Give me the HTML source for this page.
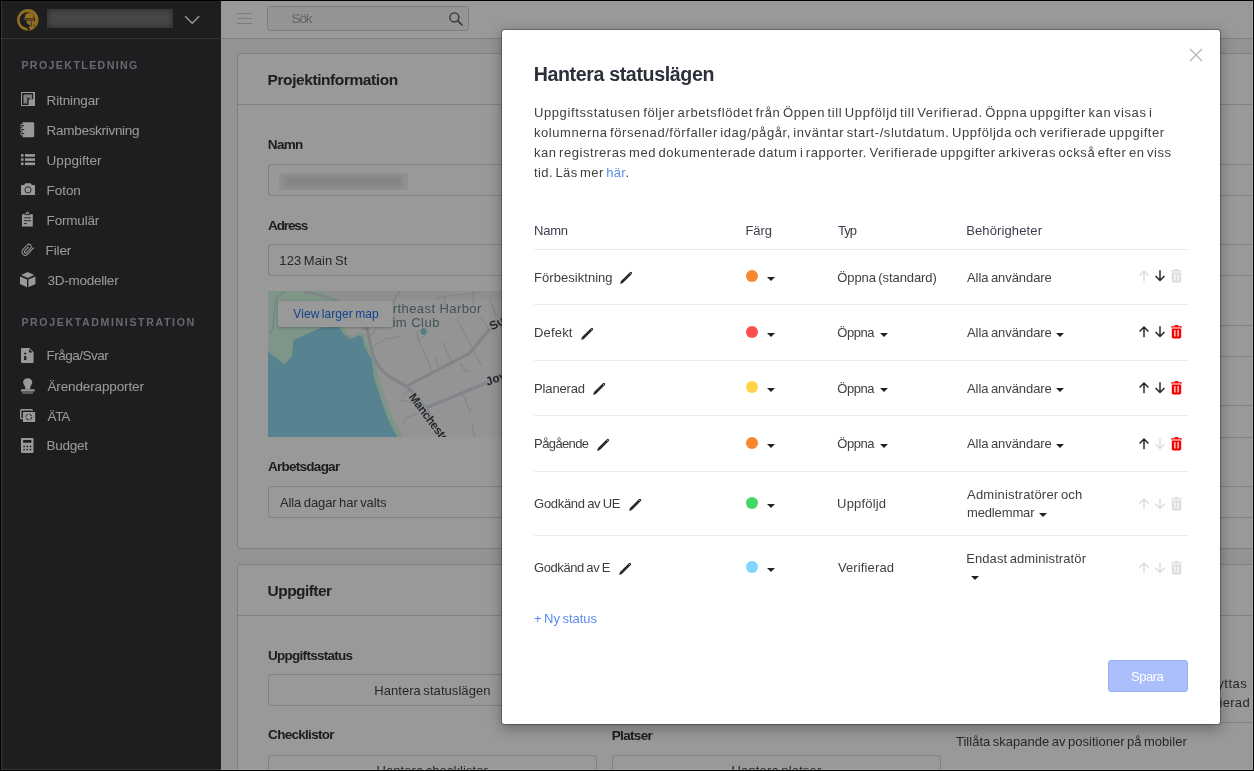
<!DOCTYPE html>
<html lang="sv">
<head>
<meta charset="utf-8">
<title>Hantera statuslägen</title>
<style>
*{box-sizing:border-box;margin:0;padding:0}
html,body{width:1254px;height:771px;overflow:hidden;background:#000}
body{position:relative;font-family:"Liberation Sans",Arial,sans-serif;font-size:13px;color:#444}
.t{position:absolute;white-space:nowrap;line-height:20px;height:20px;display:block}
.abs{position:absolute}
#app{will-change:transform;position:absolute;left:0;top:0;width:1254px;height:771px;overflow:hidden;background:#f3f5f9}
#side{position:absolute;left:0;top:0;width:221px;height:771px;background:#303236}
#side .hdr{position:absolute;left:0;top:0;width:221px;height:39px;border-bottom:1px solid #55575a}
#top{position:absolute;left:221px;top:0;width:1033px;height:39px;background:#fff;border-bottom:1px solid #d3d4d6}
.search{position:absolute;left:267px;top:6px;width:202px;height:25px;background:#f5f7fa;border:1px solid #d0d2d6;border-radius:3px}
.card{position:absolute;background:#fff;border:1px solid #d2d4d9;border-radius:3px}
.card .ch{position:absolute;left:0;top:0;right:0;height:51px;border-bottom:1px solid #d5d7da}
.inp{position:absolute;height:32px;background:#fff;border:1px solid #d3d5d8;border-radius:3px}
.hl{position:absolute;height:1px;background:#d3d5d8}
#map{position:absolute;left:268px;top:291px;width:420px;height:146px;overflow:hidden;background:#f8f7f7}
#map .vl{position:absolute;left:10px;top:10px;width:115px;height:26px;background:#fff;border-radius:2px;box-shadow:0 1px 3px rgba(0,0,0,.25)}
#backdrop{position:absolute;left:0;top:0;width:1254px;height:771px;background:rgba(0,0,0,.4)}
#modal{position:absolute;left:501px;top:29px;width:720px;height:696px;background:#fff;border:1px solid rgba(0,0,0,.28);border-radius:3.5px;box-shadow:0 4px 14px rgba(0,0,0,.3);background-clip:padding-box}
#mwrap{will-change:transform;position:absolute;left:0;top:0;width:1254px;height:771px}
.row{position:absolute;left:534px;width:654px;height:1px;background:#ececec}
.dot{position:absolute;width:12px;height:12px;border-radius:50%}
.caret{position:absolute;width:0;height:0;border-left:4px solid transparent;border-right:4px solid transparent;border-top:4px solid #222}
#spara{position:absolute;left:1108px;top:660px;width:80px;height:32px;background:#aabefc;border:1px solid #9db1f4;border-radius:3px}
a{color:#5b8def;text-decoration:none}
#frame{position:absolute;left:0;top:0;width:1254px;height:771px;border:1px solid #000;pointer-events:none}
#frame2{position:absolute;left:1px;top:1px;width:1252px;height:769px;border:1px solid rgba(255,255,255,.11);border-top:none;pointer-events:none}
svg{position:absolute;overflow:visible}
</style>
</head>
<body>
<div id="app">
  <nav id="side">
    <div class="hdr"></div>
    <svg style="left:16.8px;top:8.8px" width="21.6" height="21.6" viewBox="0 0 21.6 21.6">
<defs><linearGradient id="lg" x1="0" y1="0" x2="0.3" y2="1"><stop offset="0" stop-color="#f0b642"/><stop offset="1" stop-color="#f5b636"/></linearGradient></defs>
<circle cx="10.8" cy="10.8" r="10.75" fill="url(#lg)"/>
<circle cx="10.3" cy="11" r="7.7" fill="#303236"/>
<path d="M2.2 10.4L8.6 8.4 8 11.4Z" fill="#303236"/>
<path d="M7.7 8.9A4.5 5 0 0 1 16.7 8.9Z" fill="url(#lg)"/>
<path d="M6.6 10.6H17.2V9.6H6.6Z" fill="url(#lg)"/>
<path d="M9 11.6H17.4L18.6 17.4 15.2 20.6 11.6 20.9 12.6 17 10.6 15.4Z" fill="url(#lg)"/>
<path d="M10.6 14.2L13.4 16.6 12.2 17.6Z" fill="#303236"/>
<path d="M14.1 12.2L14.8 17.8" stroke="#303236" stroke-width="0.7"/>
<path d="M7.2 14.6L8.6 13.6 13 20.6 11.4 21.6Z" fill="#303236"/>
<path d="M16.9 15.4Q17.4 18 19.3 19.1" stroke="#303236" stroke-width="0.8" fill="none"/>
</svg>
    <div class="abs" style="left:47px;top:9px;width:126px;height:19px;background:#777;box-shadow:inset 0 0 5px 2px rgba(60,60,60,.55)"></div>
    <svg style="left:184px;top:15px" width="16" height="10" viewBox="0 0 16 10"><path d="M1.2 1.3 L8.2 8.3 L15.2 1.3" fill="none" stroke="#fff" stroke-width="1.4"/></svg>
    <svg style="left:20.6px;top:92.4px" width="14" height="14" viewBox="0 0 14 14"><rect x="0" y="0" width="14" height="14" fill="#ffffff"/><rect x="1" y="1" width="12" height="12" fill="#303236"/><rect x="2.5" y="2.5" width="8.4" height="3.3" fill="#ffffff" opacity=".8"/><rect x="2.5" y="5.8" width="3.7" height="5.7" fill="#ffffff" opacity=".8"/><rect x="2.5" y="5.6" width="2.6" height="1" fill="#ffffff" opacity=".7"/><rect x="8.6" y="5.8" width="2.3" height="1.6" fill="#ffffff" opacity=".8"/><rect x="7.6" y="7.4" width="5.4" height="5.6" fill="#ffffff"/><rect x="12.2" y="1" width="0.8" height="7" fill="#ffffff"/></svg>
<svg style="left:20.4px;top:121.8px" width="15" height="16" viewBox="0 0 15 16"><path d="M2.6 0.2H12.9Q14.2 0.2 14.2 1.5V14Q14.2 15.2 12.9 15.2H2.6Z" fill="#ffffff"/><g fill="none" stroke="#ffffff" stroke-width="1"><circle cx="2.2" cy="3.7" r="1.5"/><circle cx="2.2" cy="7.7" r="1.5"/><circle cx="2.2" cy="11.6" r="1.5"/></g><path d="M2.2 3.7H4.2M2.2 7.7H4.2M2.2 11.6H4.2" stroke="#303236" stroke-width="1"/></svg>
<svg style="left:20.6px;top:153.9px" width="14" height="12" viewBox="0 0 14 12"><g fill="#ffffff"><rect x="0" y="0.1" width="2.5" height="2.6"/><rect x="4" y="0.1" width="10" height="2.6"/><rect x="0" y="4.3" width="2.5" height="2.6"/><rect x="4" y="4.3" width="10" height="2.6"/><rect x="0" y="8.5" width="2.5" height="2.6"/><rect x="4" y="8.5" width="10" height="2.6"/></g></svg>
<svg style="left:20.6px;top:183.4px" width="14" height="12" viewBox="0 0 14 12"><path d="M0.6 2H3L4.4 0.2H9.6L11 2H13.4Q14 2 14 2.6V11.4Q14 12 13.4 12H0.6Q0 12 0 11.4V2.6Q0 2 0.6 2Z" fill="#ffffff"/><circle cx="7" cy="6.9" r="3.1" fill="none" stroke="#303236" stroke-width="0.9"/></svg>
<svg style="left:21.6px;top:210.8px" width="11" height="16" viewBox="0 0 11 16"><path d="M0 3.3H2.8L5.4 0.2L8 3.3H10.8V15.4H0Z" fill="#ffffff"/><path d="M2.8 3.6H8" stroke="#303236" stroke-width="1"/><circle cx="5.4" cy="2" r="0.7" fill="#8c8c8c"/><path d="M1.8 6.8H9M1.8 9.7H9M1.8 12.6H5" stroke="#303236" stroke-width="0.9"/></svg>
<svg style="left:20px;top:242px" width="15" height="16" viewBox="0 0 15 16"><g transform="translate(7.2,7.9) rotate(-47)"><path d="M5.8 3.3H-2.8A3.3 3.3 0 0 1 -2.8 -3.3H3.6A2.35 2.35 0 0 1 3.6 1.4H-2.4A1.25 1.25 0 0 1 -2.4 -1.1H3" fill="none" stroke="#ffffff" stroke-width="1.05" stroke-linecap="round"/></g></svg>
<svg style="left:19.9px;top:271.8px" width="15.4" height="15.4" viewBox="0 0 15.4 15.4"><g fill="#ffffff"><path d="M7.7 0.1L14.3 2.9 7.7 5.9 1.1 2.9Z"/><path d="M0 4.5L7 7.4V15.3L0 12.1Z"/><path d="M15.4 4.5L8.4 7.4V15.3L15.4 12.1Z"/></g></svg>
<svg style="left:21.2px;top:348px" width="12.6" height="15" viewBox="0 0 12.6 15"><path d="M1 0H8.4L12.6 4.2V14Q12.6 15 11.6 15H1Q0 15 0 14V1Q0 0 1 0Z" fill="#ffffff"/><path d="M8 0.9V4.6H11.7Z" fill="#303236"/><circle cx="4.2" cy="5.5" r="1.05" fill="#303236"/><rect x="3.1" y="8.1" width="2.3" height="4" fill="#303236"/></svg>
<svg style="left:20.8px;top:377.6px" width="13.6" height="16" viewBox="0 0 13.6 16"><path d="M6.7 0.2C9.5 0.2 11.3 2 11.3 4.2C11.3 6 9.6 7.4 9.2 9.5V11.3H4.2V9.5C3.8 7.4 2.1 6 2.1 4.2C2.1 2 3.9 0.2 6.7 0.2Z" fill="#ffffff"/><rect x="0" y="11.3" width="13.6" height="2.2" fill="#ffffff"/><rect x="1.3" y="14.5" width="10.8" height="1" fill="#ffffff"/></svg>
<svg style="left:20px;top:409px" width="15.2" height="13.2" viewBox="0 0 15.2 13.2"><path d="M2.9 9.6H1.6Q0.7 9.6 0.7 8.7V1.6Q0.7 0.7 1.6 0.7H11.4Q12.3 0.7 12.5 1.9" fill="none" stroke="#ffffff" stroke-width="1.4"/><rect x="2.9" y="2.9" width="12.3" height="10.2" rx="0.9" fill="#ffffff"/><circle cx="8.9" cy="8" r="2.9" fill="none" stroke="#303236" stroke-width="1" stroke-dasharray="3.2 1.35"/></svg>
<svg style="left:21.3px;top:438px" width="12.5" height="15" viewBox="0 0 12.5 15"><rect x="0" y="0" width="12.5" height="15" rx="1.1" fill="#ffffff"/><rect x="2" y="2" width="8.5" height="2.8" rx="0.7" fill="#303236"/><g fill="#303236"><circle cx="3.1" cy="8.4" r="0.85"/><circle cx="6.3" cy="8.4" r="0.85"/><circle cx="9.5" cy="8.4" r="0.85"/><circle cx="3.1" cy="11.6" r="0.85"/><circle cx="6.3" cy="11.6" r="0.85"/><circle cx="9.5" cy="11.6" r="0.85"/></g></svg>
<span class="t" id="sh1" style="left:21.40px;top:55.43px;font-size:10.6px;font-weight:700;color:#aeb0b4;letter-spacing:1.405px;">PROJEKTLEDNING</span>
<span class="t" id="s1" style="left:46.60px;top:90.72px;font-size:13.5px;font-weight:400;color:#ffffff;letter-spacing:-0.136px;">Ritningar</span>
<span class="t" id="s2" style="left:46.60px;top:120.62px;font-size:13.5px;font-weight:400;color:#ffffff;letter-spacing:-0.296px;">Rambeskrivning</span>
<span class="t" id="s3" style="left:46.60px;top:150.52px;font-size:13.5px;font-weight:400;color:#ffffff;letter-spacing:0.022px;">Uppgifter</span>
<span class="t" id="s4" style="left:46.60px;top:180.72px;font-size:13.5px;font-weight:400;color:#ffffff;letter-spacing:-0.066px;">Foton</span>
<span class="t" id="s5" style="left:46.60px;top:210.62px;font-size:13.5px;font-weight:400;color:#ffffff;letter-spacing:-0.180px;">Formulär</span>
<span class="t" id="s6" style="left:45.60px;top:240.62px;font-size:13.5px;font-weight:400;color:#ffffff;letter-spacing:-0.126px;">Filer</span>
<span class="t" id="s7" style="left:47.40px;top:270.82px;font-size:13.5px;font-weight:400;color:#ffffff;letter-spacing:-0.227px;">3D-modeller</span>
<span class="t" id="sh2" style="left:21.40px;top:311.73px;font-size:10.6px;font-weight:700;color:#aeb0b4;letter-spacing:1.625px;">PROJEKTADMINISTRATION</span>
<span class="t" id="s8" style="left:46.60px;top:346.42px;font-size:13.5px;font-weight:400;color:#ffffff;letter-spacing:-0.513px;">Fråga/Svar</span>
<span class="t" id="s9" style="left:47.40px;top:376.52px;font-size:13.5px;font-weight:400;color:#ffffff;letter-spacing:-0.126px;">Ärenderapporter</span>
<span class="t" id="s10" style="left:47.40px;top:406.62px;font-size:13.5px;font-weight:400;color:#ffffff;letter-spacing:-1.152px;">ÄTA</span>
<span class="t" id="s11" style="left:46.60px;top:436.22px;font-size:13.5px;font-weight:400;color:#ffffff;letter-spacing:-0.289px;">Budget</span>
  </nav>
  <header id="top"></header>
  <svg style="left:237px;top:12px" width="16" height="13" viewBox="0 0 16 13"><path d="M0 1.5H15M0 6.5H15M0 11.5H15" stroke="#cfcfcf" stroke-width="1" fill="none"/></svg>
  <div class="search"></div>
  <svg style="left:448px;top:11px" width="16" height="16" viewBox="0 0 16 16"><circle cx="6.4" cy="6.4" r="4.5" fill="none" stroke="#555" stroke-width="1.35"/><path d="M9.7 9.7L14 14" stroke="#555" stroke-width="1.6" stroke-linecap="round"/></svg>

  <section class="card" style="left:237px;top:53px;width:1060px;height:496px"><div class="ch"></div></section>
  <div class="inp" style="left:268px;top:164px;width:672px"></div>
  <div class="abs" style="left:279px;top:173px;width:129px;height:17px;background:#f1f1f1"></div><div class="abs" style="left:285px;top:177px;width:117px;height:9px;background:#d9d9d9;filter:blur(2.5px)"></div>
  <div class="inp" style="left:268px;top:244px;width:672px"></div>
  <div class="inp" style="left:268px;top:486px;width:672px"></div>
  <!-- right column inputs (partly visible) -->
  <div class="inp" style="left:956px;top:164px;width:330px"></div>
  <div class="inp" style="left:956px;top:244px;width:330px"></div>
  <div class="inp" style="left:956px;top:325px;width:330px"></div>
  <div class="inp" style="left:956px;top:405px;width:330px;height:33px"></div>
  <div class="inp" style="left:956px;top:486px;width:330px"></div>
  <div id="map">
    <svg style="left:0;top:0" width="420" height="146" viewBox="0 0 420 146" font-family="Liberation Sans, Arial, sans-serif">
<polygon points="57.0,0.0 252.0,0.0 252.0,9.0 70.0,9.0" fill="#f1efef"/>
<polygon points="0.0,0.0 57.0,0.0 70.0,9.0 78.0,21.0 74.0,33.0 78.0,40.0 84.0,45.0 91.0,40.5 97.0,43.0 100.5,56.0 108.0,68.0 110.0,84.0 113.0,93.0 119.5,112.0 126.0,129.5 135.5,146.0 0.0,146.0" fill="#d3f8e2"/>
<polygon points="0.0,60.6 16.2,73.4 23.8,65.2 25.5,48.9 54.7,36.3 71.0,36.3 75.7,43.0 82.2,48.3 90.9,44.2 94.4,46.0 96.8,55.9 103.8,68.7 105.5,84.0 108.0,93.0 114.3,112.5 120.9,130.1 129.3,146.0 0.0,146.0" fill="#90daee"/>
<polyline points="34.9,0.0 54.0,5.0 70.2,10.0 88.0,18.0 96.0,27.0 98.9,36.4" fill="none" stroke="#d7dee7" stroke-width="2.8" stroke-linecap="round" stroke-linejoin="round"/>
<polyline points="98.9,36.4 102.2,53.0 106.0,67.0 112.0,76.9 119.8,84.6 138.3,95.3 145.2,101.5 158.4,118.0 174.3,146.5" fill="none" stroke="#d7dee7" stroke-width="3.2" stroke-linecap="round" stroke-linejoin="round"/>
<polyline points="138.3,95.3 201.5,62.3 221.0,38.9 235.0,30.5" fill="none" stroke="#d7dee7" stroke-width="3.2" stroke-linecap="round" stroke-linejoin="round"/>
<polyline points="160.7,115.8 217.1,92.4 235.0,85.5" fill="none" stroke="#d7dee7" stroke-width="3.2" stroke-linecap="round" stroke-linejoin="round"/>
<polyline points="131.5,0.0 125.6,10.7 116.0,19.0 98.9,36.4" fill="none" stroke="#d7dee7" stroke-width="2.2" stroke-linecap="round" stroke-linejoin="round"/>
<polyline points="17.0,0.0 9.0,6.0 6.0,21.0 5.0,37.0 2.0,43.0" fill="none" stroke="#c3d3da" stroke-width="1" stroke-linecap="round" stroke-linejoin="round"/>
<polyline points="149.0,45.7 164.5,80.7" fill="none" stroke="#cfd7e0" stroke-width="0.9" stroke-linecap="round" stroke-linejoin="round"/>
<polyline points="174.3,50.6 184.0,72.0" fill="none" stroke="#cfd7e0" stroke-width="0.9" stroke-linecap="round" stroke-linejoin="round"/>
<polyline points="168.4,67.1 170.4,76.9" fill="none" stroke="#cfd7e0" stroke-width="0.9" stroke-linecap="round" stroke-linejoin="round"/>
<polyline points="188.9,28.2 213.2,73.9" fill="none" stroke="#cfd7e0" stroke-width="0.9" stroke-linecap="round" stroke-linejoin="round"/>
<polyline points="213.2,26.2 221.0,39.0" fill="none" stroke="#cfd7e0" stroke-width="0.9" stroke-linecap="round" stroke-linejoin="round"/>
<polyline points="191.8,72.0 195.7,78.8 201.5,80.7" fill="none" stroke="#cfd7e0" stroke-width="0.9" stroke-linecap="round" stroke-linejoin="round"/>
<polyline points="194.7,103.1 202.5,120.6" fill="none" stroke="#cfd7e0" stroke-width="0.9" stroke-linecap="round" stroke-linejoin="round"/>
<polyline points="204.4,133.3 206.4,146.0" fill="none" stroke="#cfd7e0" stroke-width="0.9" stroke-linecap="round" stroke-linejoin="round"/>
<polyline points="130.5,110.9 135.4,109.0 147.0,113.8" fill="none" stroke="#cfd7e0" stroke-width="0.9" stroke-linecap="round" stroke-linejoin="round"/>
<polyline points="134.4,134.3 137.3,127.5 150.9,121.6" fill="none" stroke="#cfd7e0" stroke-width="0.9" stroke-linecap="round" stroke-linejoin="round"/>
<polyline points="104.0,56.0 117.0,48.0 131.5,45.7" fill="none" stroke="#cfd7e0" stroke-width="0.9" stroke-linecap="round" stroke-linejoin="round"/>
<polyline points="167.5,6.8 213.2,1.0" fill="none" stroke="#cfd7e0" stroke-width="0.9" stroke-linecap="round" stroke-linejoin="round"/>
<polyline points="176.0,6.0 177.5,17.0" fill="none" stroke="#cfd7e0" stroke-width="0.9" stroke-linecap="round" stroke-linejoin="round"/>
<polyline points="204.4,2.0 205.5,14.0" fill="none" stroke="#cfd7e0" stroke-width="0.9" stroke-linecap="round" stroke-linejoin="round"/>
<polyline points="150.0,48.6 149.0,40.8 156.8,37.0 160.0,40.0 157.0,45.0 150.0,48.6" fill="none" stroke="#cfd7e0" stroke-width="0.9" stroke-linecap="round" stroke-linejoin="round"/>
<polyline points="102.0,45.0 110.0,36.0 116.0,33.0" fill="none" stroke="#cfd7e0" stroke-width="0.9" stroke-linecap="round" stroke-linejoin="round"/>
<polyline points="222.0,9.0 228.0,25.0" fill="none" stroke="#cfd7e0" stroke-width="0.9" stroke-linecap="round" stroke-linejoin="round"/>
<polyline points="136.0,103.0 142.0,99.0" fill="none" stroke="#cfd7e0" stroke-width="0.9" stroke-linecap="round" stroke-linejoin="round"/>
<path d="M152.4 40l3-3.4 3 3.4-1.1 3.6h-3.8z" fill="#7fd0dc"/>
<circle cx="97.5" cy="36" r="2.6" fill="none" stroke="#c4c9cf" stroke-width="1"/>
<text x="213.3" y="21.5" text-anchor="end" font-size="13" fill="#6f8793" textLength="106" lengthAdjust="spacing">Northeast Harbor</text>
<text x="171.4" y="35.7" text-anchor="end" font-size="13" fill="#6f8793" textLength="66" lengthAdjust="spacing">Swim Club</text>
<text transform="translate(143.6,103.5) rotate(53)" x="0" y="4.2" font-size="12" font-weight="700" fill="#3c4450" stroke="#f8f7f7" stroke-width="2" paint-order="stroke" textLength="80" lengthAdjust="spacing">Manchester Rd</text>
<text transform="translate(219.5,95) rotate(-21)" x="0" y="0" font-size="12" font-weight="700" fill="#3c4450" stroke="#f8f7f7" stroke-width="2" paint-order="stroke">Joy Rd</text>
<text transform="translate(224,39.5) rotate(-28)" x="0" y="0" font-size="12" font-weight="700" fill="#3c4450" stroke="#f8f7f7" stroke-width="2" paint-order="stroke">Summit Rd</text>
</svg>
    <div class="vl"></div>
  </div>
  <section class="card" style="left:237px;top:564px;width:1060px;height:400px"><div class="ch"></div></section>
  <div class="inp" style="left:268px;top:674px;width:329px"></div>
  <div class="inp" style="left:268px;top:755px;width:329px"></div>
  <div class="inp" style="left:612px;top:755px;width:329px"></div>
  <div class="hl" style="left:956px;top:722px;width:330px"></div>
<span class="t" id="sok" style="left:291.60px;top:8.62px;font-size:13.5px;font-weight:400;color:#a6a6a6;letter-spacing:-1.157px;">Sök</span>
<span class="t" id="c1" style="left:267.60px;top:70.13px;font-size:15.5px;font-weight:700;color:#333;letter-spacing:-0.422px;">Projektinformation</span>
<span class="t" id="l1" style="left:267.80px;top:134.82px;font-size:13.5px;font-weight:700;color:#333;letter-spacing:-0.655px;">Namn</span>
<span class="t" id="l2" style="left:268.10px;top:215.82px;font-size:13.5px;font-weight:700;color:#333;letter-spacing:-1.143px;">Adress</span>
<span class="t" id="i2" style="left:279.30px;top:250.80px;font-size:13px;font-weight:400;color:#444;letter-spacing:0.103px;word-spacing:-1.208px;">123 Main St</span>
<span class="t" id="vlm" style="left:293.30px;top:304.04px;font-size:12px;font-weight:400;color:#1a73e8;letter-spacing:0.084px;word-spacing:-1.104px;">View larger map</span>
<span class="t" id="l3" style="left:268.10px;top:456.82px;font-size:13.5px;font-weight:700;color:#333;letter-spacing:-0.748px;">Arbetsdagar</span>
<span class="t" id="i3" style="left:279.90px;top:492.70px;font-size:13px;font-weight:400;color:#444;letter-spacing:-0.080px;word-spacing:-1.025px;">Alla dagar har valts</span>
<span class="t" id="c2" style="left:267.60px;top:580.83px;font-size:15.5px;font-weight:700;color:#333;letter-spacing:-0.558px;">Uppgifter</span>
<span class="t" id="l4" style="left:268.10px;top:645.82px;font-size:13.5px;font-weight:700;color:#333;letter-spacing:-0.742px;">Uppgiftsstatus</span>
<span class="t" id="b1" style="left:374.20px;top:680.60px;font-size:13px;font-weight:400;color:#444;letter-spacing:0.061px;word-spacing:-1.166px;">Hantera statuslägen</span>
<span class="t" id="l5" style="left:268.10px;top:725.42px;font-size:13.5px;font-weight:700;color:#333;letter-spacing:-0.707px;">Checklistor</span>
<span class="t" id="l6" style="left:611.80px;top:725.52px;font-size:13.5px;font-weight:700;color:#333;letter-spacing:-0.681px;">Platser</span>
<span class="t" id="b2" style="left:376.50px;top:761.30px;font-size:13px;font-weight:400;color:#444;letter-spacing:0.064px;word-spacing:-1.169px;">Hantera checklistor</span>
<span class="t" id="b3" style="left:731.50px;top:761.30px;font-size:13px;font-weight:400;color:#444;letter-spacing:0.155px;word-spacing:-1.260px;">Hantera platser</span>
<span class="t" id="r1" style="left:1124.50px;top:673.60px;font-size:13px;font-weight:400;color:#444;letter-spacing:0.536px;word-spacing:-1.641px;">Uppgifter kan flyttas</span>
<span class="t" id="r2" style="left:1139.20px;top:692.60px;font-size:13px;font-weight:400;color:#444;letter-spacing:0.289px;word-spacing:-1.394px;">när de är verifierad</span>
<span class="t" id="r3" style="left:956.00px;top:732.40px;font-size:13px;font-weight:400;color:#444;letter-spacing:0.012px;word-spacing:-1.117px;">Tillåta skapande av positioner på mobiler</span>
</div>
<div id="backdrop"></div>
<div id="mwrap">
  <div id="modal"></div>
  <svg style="left:1189px;top:48px" width="14" height="14" viewBox="0 0 14 14"><path d="M1 1L13 13M13 1L1 13" stroke="#b4b4b4" stroke-width="1.1" fill="none"/></svg>
  <div class="row" style="top:249px"></div>
<div class="row" style="top:304px"></div>
<div class="row" style="top:360px"></div>
<div class="row" style="top:415px"></div>
<div class="row" style="top:471px"></div>
<div class="row" style="top:535px"></div>
<div class="dot" style="left:746px;top:270.1px;background:#f88830"></div>
<div class="caret" style="left:767px;top:276.9px"></div>
<svg style="left:620.4px;top:271.7px" width="12" height="12" viewBox="0 0 12 12"><g transform="translate(0.1,11.9) rotate(-45)"><path d="M0 0L2.6 -1.35H15.2A1.35 1.35 0 0 1 15.2 1.35H2.6Z" fill="#2a2a2a"/><circle cx="14.9" cy="0" r="0.45" fill="#fff"/></g></svg>
<div class="dot" style="left:746px;top:326.1px;background:#fc5050"></div>
<div class="caret" style="left:767px;top:332.9px"></div>
<svg style="left:581.0px;top:327.7px" width="12" height="12" viewBox="0 0 12 12"><g transform="translate(0.1,11.9) rotate(-45)"><path d="M0 0L2.6 -1.35H15.2A1.35 1.35 0 0 1 15.2 1.35H2.6Z" fill="#2a2a2a"/><circle cx="14.9" cy="0" r="0.45" fill="#fff"/></g></svg>
<div class="dot" style="left:746px;top:381.4px;background:#ffd448"></div>
<div class="caret" style="left:767px;top:388.2px"></div>
<svg style="left:592.8px;top:383.0px" width="12" height="12" viewBox="0 0 12 12"><g transform="translate(0.1,11.9) rotate(-45)"><path d="M0 0L2.6 -1.35H15.2A1.35 1.35 0 0 1 15.2 1.35H2.6Z" fill="#2a2a2a"/><circle cx="14.9" cy="0" r="0.45" fill="#fff"/></g></svg>
<div class="dot" style="left:746px;top:437.3px;background:#f88830"></div>
<div class="caret" style="left:767px;top:444.1px"></div>
<svg style="left:597.3px;top:438.9px" width="12" height="12" viewBox="0 0 12 12"><g transform="translate(0.1,11.9) rotate(-45)"><path d="M0 0L2.6 -1.35H15.2A1.35 1.35 0 0 1 15.2 1.35H2.6Z" fill="#2a2a2a"/><circle cx="14.9" cy="0" r="0.45" fill="#fff"/></g></svg>
<div class="dot" style="left:746px;top:497.3px;background:#40da66"></div>
<div class="caret" style="left:767px;top:504.1px"></div>
<svg style="left:628.7px;top:498.9px" width="12" height="12" viewBox="0 0 12 12"><g transform="translate(0.1,11.9) rotate(-45)"><path d="M0 0L2.6 -1.35H15.2A1.35 1.35 0 0 1 15.2 1.35H2.6Z" fill="#2a2a2a"/><circle cx="14.9" cy="0" r="0.45" fill="#fff"/></g></svg>
<div class="dot" style="left:746px;top:561.4px;background:#80d6ff"></div>
<div class="caret" style="left:767px;top:568.2px"></div>
<svg style="left:619.0px;top:563.0px" width="12" height="12" viewBox="0 0 12 12"><g transform="translate(0.1,11.9) rotate(-45)"><path d="M0 0L2.6 -1.35H15.2A1.35 1.35 0 0 1 15.2 1.35H2.6Z" fill="#2a2a2a"/><circle cx="14.9" cy="0" r="0.45" fill="#fff"/></g></svg>
<div class="caret" style="left:880px;top:332.5px"></div>
<div class="caret" style="left:1056px;top:332.5px"></div>
<div class="caret" style="left:880px;top:387.8px"></div>
<div class="caret" style="left:1056px;top:387.8px"></div>
<div class="caret" style="left:880px;top:443.7px"></div>
<div class="caret" style="left:1056px;top:443.7px"></div>
<div class="caret" style="left:1039px;top:513.3px"></div>
<div class="caret" style="left:971px;top:575.6px"></div>
<svg style="left:1139px;top:270.4px" width="10" height="11.4" viewBox="0 0 10 11.4"><path d="M5 11.2V1.2M0.6 5.4L5 1L9.4 5.4" fill="none" stroke="#dcdcdc" stroke-width="1.45"/></svg>
<svg style="left:1155px;top:270.4px" width="10" height="11.4" viewBox="0 0 10 11.4"><path d="M5 0.2V10.2M0.6 6L5 10.4L9.4 6" fill="none" stroke="#222" stroke-width="1.45"/></svg>
<svg style="left:1171px;top:269.3px" width="11" height="13.4" viewBox="0 0 11 13.4"><path d="M3.6 0.9Q3.6 0 4.5 0H6.5Q7.4 0 7.4 0.9V1.2H10.4Q11 1.2 11 1.8V2.6H0V1.8Q0 1.2 0.6 1.2H3.6Z M0.8 3.5H10.2V12Q10.2 13.4 8.8 13.4H2.2Q0.8 13.4 0.8 12Z M3.3 5V11.6H4.5V5Z M6.5 5V11.6H7.7V5Z" fill="#dcdcdc" fill-rule="evenodd"/></svg>
<svg style="left:1139px;top:326.4px" width="10" height="11.4" viewBox="0 0 10 11.4"><path d="M5 11.2V1.2M0.6 5.4L5 1L9.4 5.4" fill="none" stroke="#222" stroke-width="1.45"/></svg>
<svg style="left:1155px;top:326.4px" width="10" height="11.4" viewBox="0 0 10 11.4"><path d="M5 0.2V10.2M0.6 6L5 10.4L9.4 6" fill="none" stroke="#222" stroke-width="1.45"/></svg>
<svg style="left:1171px;top:325.3px" width="11" height="13.4" viewBox="0 0 11 13.4"><path d="M3.6 0.9Q3.6 0 4.5 0H6.5Q7.4 0 7.4 0.9V1.2H10.4Q11 1.2 11 1.8V2.6H0V1.8Q0 1.2 0.6 1.2H3.6Z M0.8 3.5H10.2V12Q10.2 13.4 8.8 13.4H2.2Q0.8 13.4 0.8 12Z M3.3 5V11.6H4.5V5Z M6.5 5V11.6H7.7V5Z" fill="#f00" fill-rule="evenodd"/></svg>
<svg style="left:1139px;top:381.7px" width="10" height="11.4" viewBox="0 0 10 11.4"><path d="M5 11.2V1.2M0.6 5.4L5 1L9.4 5.4" fill="none" stroke="#222" stroke-width="1.45"/></svg>
<svg style="left:1155px;top:381.7px" width="10" height="11.4" viewBox="0 0 10 11.4"><path d="M5 0.2V10.2M0.6 6L5 10.4L9.4 6" fill="none" stroke="#222" stroke-width="1.45"/></svg>
<svg style="left:1171px;top:380.6px" width="11" height="13.4" viewBox="0 0 11 13.4"><path d="M3.6 0.9Q3.6 0 4.5 0H6.5Q7.4 0 7.4 0.9V1.2H10.4Q11 1.2 11 1.8V2.6H0V1.8Q0 1.2 0.6 1.2H3.6Z M0.8 3.5H10.2V12Q10.2 13.4 8.8 13.4H2.2Q0.8 13.4 0.8 12Z M3.3 5V11.6H4.5V5Z M6.5 5V11.6H7.7V5Z" fill="#f00" fill-rule="evenodd"/></svg>
<svg style="left:1139px;top:437.6px" width="10" height="11.4" viewBox="0 0 10 11.4"><path d="M5 11.2V1.2M0.6 5.4L5 1L9.4 5.4" fill="none" stroke="#222" stroke-width="1.45"/></svg>
<svg style="left:1155px;top:437.6px" width="10" height="11.4" viewBox="0 0 10 11.4"><path d="M5 0.2V10.2M0.6 6L5 10.4L9.4 6" fill="none" stroke="#dcdcdc" stroke-width="1.45"/></svg>
<svg style="left:1171px;top:436.5px" width="11" height="13.4" viewBox="0 0 11 13.4"><path d="M3.6 0.9Q3.6 0 4.5 0H6.5Q7.4 0 7.4 0.9V1.2H10.4Q11 1.2 11 1.8V2.6H0V1.8Q0 1.2 0.6 1.2H3.6Z M0.8 3.5H10.2V12Q10.2 13.4 8.8 13.4H2.2Q0.8 13.4 0.8 12Z M3.3 5V11.6H4.5V5Z M6.5 5V11.6H7.7V5Z" fill="#f00" fill-rule="evenodd"/></svg>
<svg style="left:1139px;top:497.6px" width="10" height="11.4" viewBox="0 0 10 11.4"><path d="M5 11.2V1.2M0.6 5.4L5 1L9.4 5.4" fill="none" stroke="#dcdcdc" stroke-width="1.45"/></svg>
<svg style="left:1155px;top:497.6px" width="10" height="11.4" viewBox="0 0 10 11.4"><path d="M5 0.2V10.2M0.6 6L5 10.4L9.4 6" fill="none" stroke="#dcdcdc" stroke-width="1.45"/></svg>
<svg style="left:1171px;top:496.5px" width="11" height="13.4" viewBox="0 0 11 13.4"><path d="M3.6 0.9Q3.6 0 4.5 0H6.5Q7.4 0 7.4 0.9V1.2H10.4Q11 1.2 11 1.8V2.6H0V1.8Q0 1.2 0.6 1.2H3.6Z M0.8 3.5H10.2V12Q10.2 13.4 8.8 13.4H2.2Q0.8 13.4 0.8 12Z M3.3 5V11.6H4.5V5Z M6.5 5V11.6H7.7V5Z" fill="#dcdcdc" fill-rule="evenodd"/></svg>
<svg style="left:1139px;top:561.7px" width="10" height="11.4" viewBox="0 0 10 11.4"><path d="M5 11.2V1.2M0.6 5.4L5 1L9.4 5.4" fill="none" stroke="#dcdcdc" stroke-width="1.45"/></svg>
<svg style="left:1155px;top:561.7px" width="10" height="11.4" viewBox="0 0 10 11.4"><path d="M5 0.2V10.2M0.6 6L5 10.4L9.4 6" fill="none" stroke="#dcdcdc" stroke-width="1.45"/></svg>
<svg style="left:1171px;top:560.6px" width="11" height="13.4" viewBox="0 0 11 13.4"><path d="M3.6 0.9Q3.6 0 4.5 0H6.5Q7.4 0 7.4 0.9V1.2H10.4Q11 1.2 11 1.8V2.6H0V1.8Q0 1.2 0.6 1.2H3.6Z M0.8 3.5H10.2V12Q10.2 13.4 8.8 13.4H2.2Q0.8 13.4 0.8 12Z M3.3 5V11.6H4.5V5Z M6.5 5V11.6H7.7V5Z" fill="#dcdcdc" fill-rule="evenodd"/></svg>
  <div id="spara"></div>
<span class="t" id="mt" style="left:533.70px;top:64.21px;font-size:19.6px;font-weight:700;color:#2b303b;letter-spacing:-0.364px;">Hantera statuslägen</span>
<span class="t" id="p1" style="left:533.90px;top:102.80px;font-size:13px;font-weight:400;color:#3f3f3f;letter-spacing:0.622px;word-spacing:-1.727px;">Uppgiftsstatusen följer arbetsflödet från Öppen till Uppföljd till Verifierad. Öppna uppgifter kan visas i</span>
<span class="t" id="p2" style="left:534.00px;top:122.90px;font-size:13px;font-weight:400;color:#3f3f3f;letter-spacing:0.565px;word-spacing:-1.670px;">kolumnerna försenad/förfaller idag/pågår, inväntar start-/slutdatum. Uppföljda och verifierade uppgifter</span>
<span class="t" id="p3" style="left:534.00px;top:142.90px;font-size:13px;font-weight:400;color:#3f3f3f;letter-spacing:0.550px;word-spacing:-1.655px;">kan registreras med dokumenterade datum i rapporter. Verifierade uppgifter arkiveras också efter en viss</span>
<span class="t" id="p4" style="left:534.00px;top:162.80px;font-size:13px;font-weight:400;color:#3f3f3f;letter-spacing:0.390px;word-spacing:-1.495px;">tid. Läs mer <a>här</a>.</span>
<span class="t" id="h1" style="left:534.10px;top:220.80px;font-size:13px;font-weight:400;color:#3a3f4d;letter-spacing:-0.230px;">Namn</span>
<span class="t" id="h2" style="left:745.40px;top:220.80px;font-size:13px;font-weight:400;color:#3a3f4d;letter-spacing:-0.016px;">Färg</span>
<span class="t" id="h3" style="left:838.10px;top:220.80px;font-size:13px;font-weight:400;color:#3a3f4d;letter-spacing:-0.987px;">Typ</span>
<span class="t" id="h4" style="left:966.20px;top:220.80px;font-size:13px;font-weight:400;color:#3a3f4d;letter-spacing:0.122px;">Behörigheter</span>
<span class="t" id="n0" style="left:534.10px;top:267.50px;font-size:13px;font-weight:400;color:#3f3f3f;letter-spacing:0.038px;">Förbesiktning</span>
<span class="t" id="n1" style="left:534.10px;top:323.30px;font-size:13px;font-weight:400;color:#3f3f3f;letter-spacing:0.143px;">Defekt</span>
<span class="t" id="n2" style="left:534.10px;top:378.80px;font-size:13px;font-weight:400;color:#3f3f3f;letter-spacing:-0.164px;">Planerad</span>
<span class="t" id="n3" style="left:534.10px;top:434.20px;font-size:13px;font-weight:400;color:#3f3f3f;letter-spacing:-0.614px;">Pågående</span>
<span class="t" id="n4" style="left:534.10px;top:493.70px;font-size:13px;font-weight:400;color:#3f3f3f;letter-spacing:-0.319px;word-spacing:-0.786px;">Godkänd av UE</span>
<span class="t" id="n5" style="left:534.10px;top:557.60px;font-size:13px;font-weight:400;color:#3f3f3f;letter-spacing:-0.432px;word-spacing:-0.673px;">Godkänd av E</span>
<span class="t" id="ty0" style="left:837.30px;top:267.60px;font-size:13px;font-weight:400;color:#3f3f3f;letter-spacing:-0.093px;word-spacing:-1.012px;">Öppna (standard)</span>
<span class="t" id="ty1" style="left:837.30px;top:323.30px;font-size:13px;font-weight:400;color:#3f3f3f;letter-spacing:-0.439px;">Öppna</span>
<span class="t" id="ty2" style="left:837.30px;top:378.80px;font-size:13px;font-weight:400;color:#3f3f3f;letter-spacing:-0.439px;">Öppna</span>
<span class="t" id="ty3" style="left:837.30px;top:434.20px;font-size:13px;font-weight:400;color:#3f3f3f;letter-spacing:-0.439px;">Öppna</span>
<span class="t" id="ty4" style="left:837.10px;top:493.70px;font-size:13px;font-weight:400;color:#3f3f3f;letter-spacing:0.185px;">Uppföljd</span>
<span class="t" id="ty5" style="left:837.90px;top:557.60px;font-size:13px;font-weight:400;color:#3f3f3f;letter-spacing:0.129px;">Verifierad</span>
<span class="t" id="be0" style="left:967.00px;top:267.60px;font-size:13px;font-weight:400;color:#3f3f3f;letter-spacing:-0.069px;word-spacing:-1.036px;">Alla användare</span>
<span class="t" id="be1" style="left:967.00px;top:323.30px;font-size:13px;font-weight:400;color:#3f3f3f;letter-spacing:-0.069px;word-spacing:-1.036px;">Alla användare</span>
<span class="t" id="be2" style="left:967.00px;top:378.80px;font-size:13px;font-weight:400;color:#3f3f3f;letter-spacing:-0.069px;word-spacing:-1.036px;">Alla användare</span>
<span class="t" id="be3" style="left:967.00px;top:434.20px;font-size:13px;font-weight:400;color:#3f3f3f;letter-spacing:-0.069px;word-spacing:-1.036px;">Alla användare</span>
<span class="t" id="be4a" style="left:967.00px;top:484.80px;font-size:13px;font-weight:400;color:#3f3f3f;letter-spacing:0.217px;word-spacing:-1.322px;">Administratörer och</span>
<span class="t" id="be4b" style="left:967.00px;top:503.30px;font-size:13px;font-weight:400;color:#3f3f3f;letter-spacing:-0.142px;">medlemmar</span>
<span class="t" id="be5" style="left:966.20px;top:548.60px;font-size:13px;font-weight:400;color:#3f3f3f;letter-spacing:0.092px;word-spacing:-1.197px;">Endast administratör</span>
<span class="t" id="ny" style="left:534.00px;top:608.50px;font-size:13px;font-weight:400;color:#5b8def;letter-spacing:-0.013px;word-spacing:-1.092px;">+ Ny status</span>
<span class="t" id="sp" style="left:1131.10px;top:667.30px;font-size:13px;font-weight:400;color:#fff;letter-spacing:-0.528px;">Spara</span>
</div>
<div id="frame"></div><div id="frame2"></div>
</body>
</html>
